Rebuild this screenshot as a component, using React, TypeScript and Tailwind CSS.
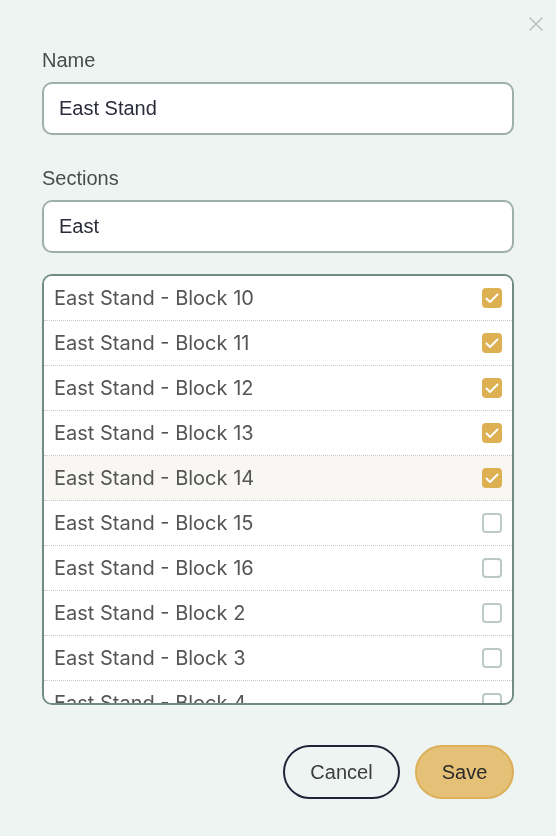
import { useState } from 'react'

const blocks = ['10', '11', '12', '13', '14', '15', '16', '2', '3', '4', '5', '6', '7', '8', '9']
const initiallyChecked = ['10', '11', '12', '13', '14']

function CheckBox({ checked }: { checked: boolean }) {
  if (checked) {
    return (
      <span className="flex h-5 w-5 items-center justify-center rounded-[4px] bg-[#ddb052]">
        <svg viewBox="0 0 20 20" className="h-5 w-5" fill="none" stroke="white" strokeWidth="2" strokeLinecap="round" strokeLinejoin="round">
          <path d="M4.5 10.5l3.5 3.5 7.5-7.5" />
        </svg>
      </span>
    )
  }
  return <span className="block h-5 w-5 rounded-[4px] border-2 border-[#bccac7] bg-white" />
}

export default function App() {
  const [name, setName] = useState('East Stand')
  const [filter, setFilter] = useState('East')
  const [checked, setChecked] = useState<string[]>(initiallyChecked)

  const toggle = (b: string) =>
    setChecked((prev) => (prev.includes(b) ? prev.filter((x) => x !== b) : [...prev, b]))

  return (
    <div className="relative min-h-[836px] w-full bg-[#eef4f1] px-[42px] pt-[48px] font-['Liberation_Sans',Arial,sans-serif]">
      <button type="button" className="absolute right-[12px] top-[16px] text-[#bcc0bf]" aria-label="Close">
        <svg viewBox="0 0 16 16" className="h-4 w-4" fill="none" stroke="currentColor" strokeWidth="1.5" strokeLinecap="round">
          <path d="M2 2l12 12M14 2L2 14" />
        </svg>
      </button>

      <label className="block text-[20px] leading-6 text-[#484d4c]">Name</label>
      <input
        value={name}
        onChange={(e) => setName(e.target.value)}
        className="mt-[10px] block h-[53px] w-full rounded-[10px] border-2 border-[#9fb0ac] bg-white px-[15px] text-[20px] text-[#2a2c3a] outline-none"
      />

      <label className="mt-[31px] block text-[20px] leading-6 text-[#484d4c]">Sections</label>
      <input
        value={filter}
        onChange={(e) => setFilter(e.target.value)}
        className="mt-[10px] block h-[53px] w-full rounded-[10px] border-2 border-[#9fb0ac] bg-white px-[15px] text-[20px] text-[#2a2c3a] outline-none"
      />

      <div className="mt-[21px] h-[431px] overflow-y-auto rounded-[10px] border-2 border-[#718b86] bg-white [scrollbar-width:none]">
        {blocks.map((b) => (
          <div
            key={b}
            onClick={() => toggle(b)}
            className={`flex h-[45px] cursor-pointer items-center justify-between border-b border-dotted border-[#c8c8c8] pl-[10px] pr-[10px] font-['Inter',sans-serif] text-[20px] text-[#555555] ${b === '14' ? 'bg-[#f8f7f3]' : ''}`}
          >
            <span>East Stand - Block {b}</span>
            <CheckBox checked={checked.includes(b)} />
          </div>
        ))}
      </div>

      <div className="mt-[40px] flex justify-end gap-[15px]">
        <button
          type="button"
          className="h-[54px] w-[117px] rounded-full border-2 border-[#1e2436] text-[20px] text-[#3d3d3d]"
        >
          Cancel
        </button>
        <button
          type="button"
          className="h-[54px] w-[99px] rounded-full border-2 border-[#dcae57] bg-[#e5c077] text-[20px] text-[#2a2a2a]"
        >
          Save
        </button>
      </div>
    </div>
  )
}
